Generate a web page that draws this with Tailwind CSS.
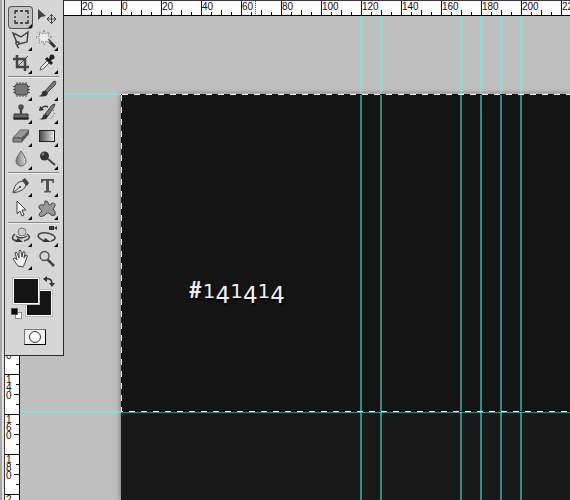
<!DOCTYPE html>
<html lang="en">
<head>
  <meta charset="UTF-8" />
  <meta name="viewport" content="width=device-width, initial-scale=1.0" />
  <title>Canvas</title>
  <script src="https://cdn.jsdelivr.net/npm/@tailwindcss/browser@4"></script>
</head>
<body class="bg-[#bfbfbf] font-['Liberation_Sans',sans-serif]">
  <div class="relative flex h-screen overflow-hidden">
    <!-- window edge -->
    <div class="flex shrink-0">
      <div class="w-[2px] bg-[#a8a8a8]"></div>
      <div class="w-[2px] bg-[#e2e2e2]"></div>
      <div class="w-px bg-[#3a3a3a]"></div>
    </div>

    <div class="flex min-w-0 flex-1 flex-col">
      <!-- top ruler -->
      <div class="h-4 shrink-0 overflow-hidden border-t border-b border-t-[#38343a] border-b-black bg-white">
        <svg id="rulerX" class="block h-[14px] w-full" font-size="10" fill="#111" shape-rendering="crispEdges"></svg>
      </div>

      <div class="flex min-h-0 flex-1">
        <!-- left ruler -->
        <div class="w-[15px] shrink-0 overflow-hidden border-r border-black bg-white">
          <svg id="rulerY" class="block h-full w-[14px]" font-size="10" fill="#111" shape-rendering="crispEdges"></svg>
        </div>

        <!-- canvas -->
        <main class="relative min-w-0 flex-1 overflow-hidden">
          <div class="absolute top-[78px] right-0 bottom-0 left-[101px] bg-[#191919] shadow-[0_0_5px_rgba(0,0,0,0.5)]">
            <div class="relative h-[318px] bg-[#141414]">
              <!-- old-style figures: short ones, descending fours -->
              <p class="absolute top-[180px] left-[68px] font-['DejaVu_Sans',sans-serif] text-[20px] leading-8 whitespace-nowrap text-[#eee] [text-shadow:1px_2px_2px_#000]"><span class="mr-px font-['Lato',sans-serif] text-[22px] font-bold">#</span>1<span class="align-[-5px] text-[23px] leading-none">4</span>1<span class="align-[-5px] text-[23px] leading-none">4</span>1<span class="align-[-5px] text-[23px] leading-none">4</span></p>
            </div>
          </div>
          <svg id="guides" class="absolute inset-0 h-full w-full" fill="rgb(74,255,255)" fill-opacity="0.5" shape-rendering="crispEdges"></svg>
          <svg class="absolute inset-0 h-full w-full" fill="none" shape-rendering="crispEdges">
            <path d="M101 78.500H3000M101 395.500H3000M101.500 78V396" stroke="#000" />
            <path d="M101 78.500H3000" stroke="#fff" stroke-dasharray="6 6" stroke-dashoffset="11" />
            <path d="M101 395.500H3000" stroke="#fff" stroke-dasharray="6 6" stroke-dashoffset="4" />
            <path d="M101.500 78V396" stroke="#fff" stroke-dasharray="6 6" stroke-dashoffset="11" />
          </svg>
        </main>
      </div>
    </div>

    <!-- toolbox -->
    <aside class="absolute top-0 left-[5px] flex h-[356px] w-[59px] flex-col border-r border-b border-[#2b2b2b] bg-[#d6d6d6] pt-[6px] pl-[3px]">
      <div id="tools" class="flex flex-col"></div>

      <div class="relative mt-[6px] h-[44px]">
        <button aria-label="Background color" class="absolute top-[12px] left-[17px] size-7 border border-[#bbb] bg-[#141414] ring-1 ring-white ring-inset"></button>
        <button aria-label="Foreground color" class="absolute top-0 left-[4px] size-7 border border-[#bbb] bg-[#141414] ring-1 ring-white ring-inset"></button>
        <button aria-label="Swap colors" class="absolute -top-px left-[35px] size-3">
          <svg viewBox="0 0 12 12" class="size-3" fill="none" stroke="#333" stroke-width="1.500"><path d="M3 3C7 2 9 4 9 8" /><path d="M4 0L0 3L4 6ZM6 7H12L9 11Z" fill="#333" stroke="none" /></svg>
        </button>
        <button aria-label="Default colors" class="absolute top-[31px] left-[3px] size-3">
          <svg viewBox="0 0 12 12" class="size-3" shape-rendering="crispEdges"><path d="M4 4H10V10H4Z" fill="#fff" stroke="#888" /><path d="M0 0H7V7H0Z" fill="#555" /><path d="M1 1H6V6H1Z" fill="#000" /></svg>
        </button>
      </div>
      <button aria-label="Quick mask" class="mt-[8px] ml-[16px] flex h-4 w-[22px] items-center justify-center border border-t-[#777] border-r-black border-b-black border-l-[#777] bg-[#f2f2f2]">
        <svg viewBox="0 0 14 14" class="size-[14px]"><circle cx="7" cy="7" r="5.500" fill="#fff" stroke="#333" /></svg>
      </button>
    </aside>
  </div>

  <script>
    const tools = [
      ['Marquee', '<path d="M6 9V6h3M11 6h3M16 6h3v3M19 11v2M19 15v3h-3M14 18h-3M9 18H6v-3M6 13v-2" fill="none" stroke="#222" stroke-width="1.300"/>'],
      ['Move', '<path d="M3 4v11l3-3 5-1z" fill="#444"/><path d="M12 14h9M16.500 9.500v9M14.500 11.500l2-2 2 2M14.500 16.500l2 2 2-2M14 12l-2 2 2 2M19 12l2 2-2 2" fill="none" stroke="#444"/>'],
      ['Lasso', '<path d="M8 15L4 5l8 4 7-5-1 10-8 2M10 14q-4-1-3 2 3 2 3-2M8 17q0 2 2 3" fill="none" stroke="#444" stroke-width="1.500"/>'],
      ['Magic wand', '<path d="M12 11l8 8" stroke="#333" stroke-width="3"/><path d="M9 2l1 4 4-2-1 4 4 1-4 2 2 4-4-2-2 4-1-4-4 2 1-4-4-2 4-1-1-4 4 2z" fill="#eee" stroke="#888" stroke-dasharray="2 1"/>'],
      ['Crop', '<path d="M8 4v12h12M4 8h12v12" fill="none" stroke="#444" stroke-width="2.500"/><path d="M7 17L19 5" stroke="#444"/>'],
      ['Eyedropper', '<path d="M5 19l1-3 7-7 2 2-7 7z" fill="#eee" stroke="#555"/><path d="M11 7l6 6M14 10l3-4" stroke="#222" stroke-width="3"/><circle cx="17" cy="6" r="2.500" fill="#222"/>'],
      ['Healing patch', '<path d="M8 4v15M11 4v15M14 4v15M17 4v15M4 8.500h17M4 11.500h17M4 14.500h17" stroke="#555"/><rect x="6" y="6" width="13" height="11" rx="3" fill="#777" stroke="#444"/>'],
      ['Brush', '<path d="M10 13L19 3l2 1-1 3-8 8z" fill="#777" stroke="#444"/><path d="M3 18q4 0 4-4 3-3 6 1-1 5-10 3z" fill="#333"/>'],
      ['Stamp', '<circle cx="12" cy="6" r="2.800" fill="#555"/><path d="M10.500 7h3l-.5 6h-2z" fill="#444"/><path d="M5 13h14v5H5z" fill="#666" stroke="#333"/><path d="M4.500 17.500h15" stroke="#222" stroke-width="2"/>'],
      ['History brush', '<path d="M10 13L17 4l3-1-1 3-6 9z" fill="#777" stroke="#444"/><path d="M4 18q4 0 4-4 3-2 5 1-1 5-9 3z" fill="#333"/><path d="M6 8q3-4 7-2" fill="none" stroke="#333" stroke-width="1.500"/><path d="M4 10l1-5 4 4z" fill="#333"/><path d="M18 9q3 5-3 9" fill="none" stroke="#333" stroke-dasharray="1 2"/>'],
      ['Eraser', '<path d="M4 14l7-8h9l-7 8z" fill="#999" stroke="#666"/><path d="M4 14h9v4H4z" fill="#888" stroke="#555"/><path d="M13 14l7-8v4l-7 8z" fill="#555"/>'],
      ['Gradient', '<rect x="4.500" y="6.500" width="15" height="11" fill="url(#fade)" stroke="#222"/>'],
      ['Blur', '<path d="M12 4q5 7 5 10a5 5 0 0 1-10 0q0-3 5-10z" fill="url(#drop)" stroke="#666"/>'],
      ['Dodge', '<path d="M13 12l7 6" stroke="#444" stroke-width="2"/><circle cx="9.500" cy="9" r="4.500" fill="#333"/><circle cx="8" cy="7" r="1.500" fill="#777"/>'],
      ['Pen', '<path d="M4 19q1-8 6-11l4-1 3 4q-1 6-13 8zM5 18l6-5" fill="#ddd" stroke="#444"/><circle cx="11" cy="13" r="1" fill="#333"/><path d="M13 6l3-2 4 5-2 3z" fill="#444"/>'],
      ['Type', '<path d="M6 5h13v4h-1.200q-.3-2.300-2.300-2.300h-1.500V16q0 1.300 2 1.300V18.500H9V17.300q2 0 2-1.300V6.700H9.500Q7.500 6.700 7.200 9H6z" fill="#555"/>'],
      ['Selection', '<path d="M8 4v13l3-3 2 5 2-1-2-5h4z" fill="#f5f5f5" stroke="#444"/>'],
      ['Custom shape', '<path d="M10 4q3-1 4 4 2 0 3-2 4 0 3 3l-2 3q3 2 2 6-3 2-6-2-2-1-4 2-5 3-6 0 0-2 3-4-1-2-3-3-1-4 5-3 1-1 1-4z" fill="#999" stroke="#444"/>'],
      ['3D rotate', '<path d="M6 10q-6 5 2 7M18 10q6 4-3 7M7 12q5 4 11 0" fill="none" stroke="#444" stroke-width="1.500"/><circle cx="13" cy="8" r="4" fill="#ccc" stroke="#777"/><path d="M9 14l5 4H6z" fill="#333"/>'],
      ['3D orbit', '<path d="M9 17q-8-4-5-7 6-3 14 1 5 4-2 6" fill="none" stroke="#444" stroke-width="1.500"/><path d="M10 14l6 4H8z" fill="#333"/><path d="M14 2h5v4h-5zM19 4l3-2v4z" fill="#333"/>'],
      ['Hand', '<path d="M9 19l-5-7q1-2 3 0l1 1-2-7q1-2 2 0l2 5V4q1-2 2 0l1 6 1-5q2-1 2 1l-1 5 2-3q2 0 1 2l-2 6-2 4z" fill="#eee" stroke="#444"/>'],
      ['Zoom', '<path d="M12 12l7 7" stroke="#444" stroke-width="2.500"/><circle cx="9.500" cy="9" r="4.500" fill="#d4d4d4" stroke="#555" stroke-width="1.500"/>'],
    ];
    const noFlyout = ['Move', 'Zoom'];
    // rows after which a separator is drawn
    const breaks = [2, 6, 8];

    let html = '<svg class="absolute size-0"><defs><linearGradient id="fade"><stop stop-color="#444"/><stop offset="1" stop-color="#eee"/></linearGradient><linearGradient id="drop"><stop stop-color="#777"/><stop offset="1" stop-color="#ddd"/></linearGradient></defs></svg>';
    for (let row = 0; row < tools.length / 2; row++) {
      html += '<div class="flex h-[23px] gap-px">';
      for (const [name, icon] of tools.slice(row * 2, row * 2 + 2)) {
        const active = name === 'Marquee' ? 'rounded-sm bg-[#c4c4c4] ring-1 ring-[#555] ring-inset' : '';
        const flyout = noFlyout.includes(name) ? '' : '<path d="M23 19v4h-4z" fill="#000"/>';
        html += `<button aria-label="${name}" class="relative h-[23px] w-[25px] ${active}"><svg viewBox="0 0 24 24" class="absolute -top-px left-px size-6">${icon}${flyout}</svg></button>`;
      }
      html += '</div>';
      if (breaks.includes(row)) html += '<hr class="mt-px mb-px mr-1 h-[2px] border-t border-b border-t-[#888] border-b-[#eee]">';
    }
    document.getElementById('tools').innerHTML = html;

    // rulers: labelled mark every 40px, smaller marks every 10px
    let rx = '<path d="M250.500 0V14" stroke="#555" stroke-dasharray="1 1"/>';
    for (let x = -4; 121 + x * 10 < window.innerWidth; x++) {
      const px = 116 + x * 10;
      const h = x % 4 === 0 ? 14 : x % 2 === 0 ? 5 : 3;
      rx += `<rect x="${px}" y="${14 - h}" width="1" height="${h}"/>`;
      if (h === 14) rx += `<text x="${px + 1}" y="9">${Math.abs(x * 5)}</text>`;
    }
    document.getElementById('rulerX').innerHTML = rx;

    // the toolbox hides the marks above 120
    let ry = '';
    for (let y = 24; 94 + y * 10 < window.innerHeight; y++) {
      const py = 78 + y * 10;
      const w = y % 4 === 0 ? 14 : y % 2 === 0 ? 5 : 3;
      ry += `<rect x="${14 - w}" y="${py}" width="${w}" height="1"/>`;
      if (w === 14) [...String(y * 5)].forEach((c, i) => ry += `<text x="1" y="${py + 9 + i * 8}">${c}</text>`);
    }
    document.getElementById('rulerY').innerHTML = ry;

    let g = '';
    for (const x of [340, 360, 440, 460, 480, 500]) g += `<rect x="${x}" y="0" width="2" height="100%"/>`;
    for (const y of [77, 395]) g += `<rect x="0" y="${y}" width="100%" height="2"/>`;
    document.getElementById('guides').innerHTML = g;
  </script>
</body>
</html>
